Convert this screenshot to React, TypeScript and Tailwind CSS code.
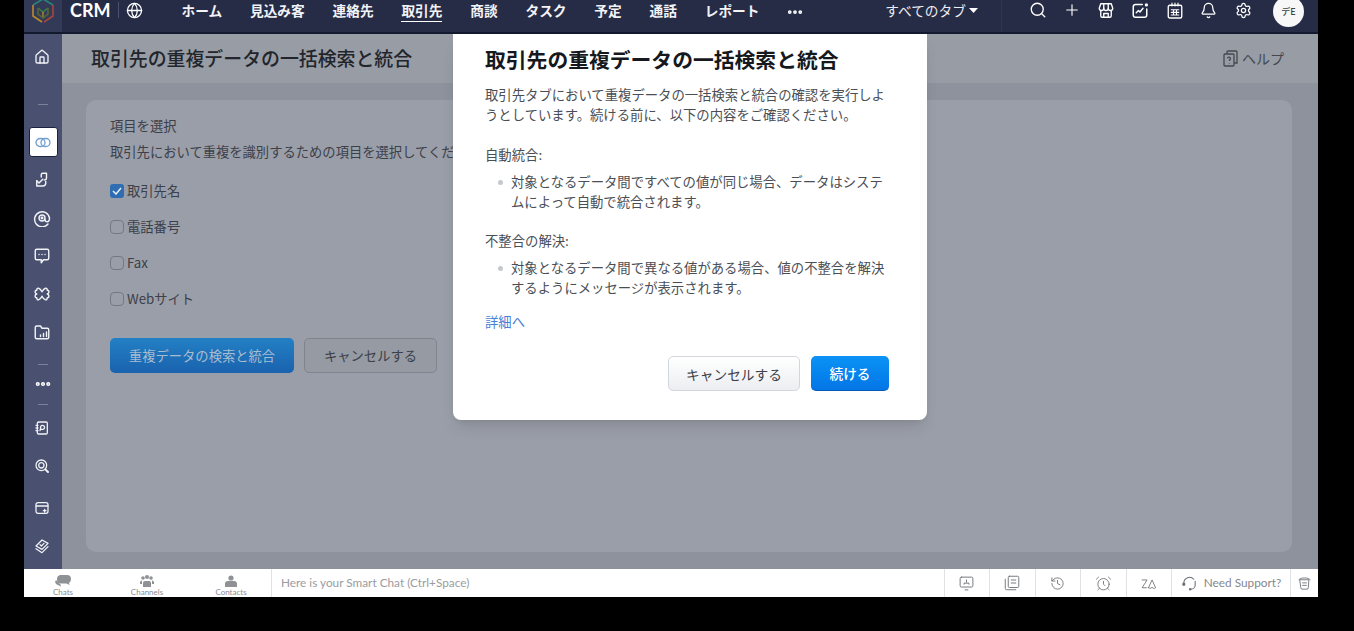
import { Search, Plus, Bell, Settings, Home, MoreHorizontal, History, AlarmClock, Globe } from 'lucide-react';
import { ReactNode } from 'react';

const jp = { fontFamily: '"Noto Sans CJK JP", sans-serif' };

const navItems = ['ホーム', '見込み客', '連絡先', '取引先', '商談', 'タスク', '予定', '通話', 'レポート'];

function Ico({ children, size = 18, sw = 2 }: { children: ReactNode; size?: number; sw?: number }) {
  return (
    <svg width={size} height={size} viewBox="0 0 24 24" fill="none" stroke="currentColor" strokeWidth={sw} strokeLinecap="round" strokeLinejoin="round">
      {children}
    </svg>
  );
}

function Logo() {
  return (
    <svg width="24" height="26" viewBox="0 0 24 26" fill="none" strokeWidth="1.6">
      <path d="M2 7 L12 1 L22 7" stroke="#2a8478" />
      <path d="M2 7 V18 L11 24" stroke="#b98a2a" />
      <path d="M22 7 V18 L13 24" stroke="#a8443c" />
      <path d="M7 10 L12 14 L17 10" stroke="#3a7d49" />
      <path d="M12 14 V20" stroke="#a67c28" />
      <path d="M7 10 V16 L12 20 L17 16 V10" stroke="#566636" />
    </svg>
  );
}

function TopIcon({ children }: { children: ReactNode }) {
  return <div className="w-[18px] h-[20px] flex items-center justify-center">{children}</div>;
}

function TopBar() {
  return (
    <header className="h-[34px] shrink-0 bg-[#272c46] border-b-2 border-[#131a30] flex items-start text-white relative">
      <div className="w-[38px] h-full bg-[#333a57] flex justify-center items-start overflow-hidden">
        <div className="-mt-[2px]"><Logo /></div>
      </div>
      <span className="ml-2 mt-[1px] text-[18px] font-bold leading-[18px]" style={{ fontFamily: 'Lato, sans-serif' }}>CRM</span>
      <span className="ml-[7px] mt-[2px] w-px h-4 bg-[#4a5070]" />
      <Globe size={17} strokeWidth={1.8} className="ml-[7px] mt-[2px] text-white" />
      <nav className="ml-[39px] flex items-start gap-[27.8px]" style={jp}>
        {navItems.map((item) => (
          <div key={item} className="relative">
            <span className="block text-[13.7px] font-bold leading-5 text-[#f2f3f6]">{item}</span>
            {item === '取引先' && <span className="absolute left-0 right-0 top-[21px] h-px bg-white" />}
          </div>
        ))}
        <MoreHorizontal size={18} strokeWidth={3} className="mt-[3px] -ml-[1px]" />
      </nav>
      <div className="ml-[81px] flex items-center gap-[3px]" style={jp}>
        <span className="text-[13.7px] leading-5 text-[#eceef3]">すべてのタブ</span>
        <svg width="9" height="5" viewBox="0 0 9 5" className="fill-white"><path d="M0 0h9L4.500 5z" /></svg>
      </div>
      <span className="ml-[23px] w-px h-full bg-[#30364f]" />
      <div className="ml-[27px] flex items-center gap-[16.2px]">
        <TopIcon><Search size={18} strokeWidth={1.8} /></TopIcon>
        <TopIcon><Plus size={24} strokeWidth={1.5} /></TopIcon>
        <TopIcon>
          <Ico size={19} sw={1.8}>
            <path d="M5 3h14l2 6a3 3 0 0 1-6 0 3 3 0 0 1-6 0 3 3 0 0 1-6 0z" />
            <path d="M9 3v6M15 3v6" />
            <path d="M5 12v7a2 2 0 0 0 2 2h10a2 2 0 0 0 2-2v-7" />
            <path d="M9 21v-5h6v5" />
          </Ico>
        </TopIcon>
        <TopIcon>
          <Ico size={19} sw={2}>
            <path d="M21 10v8a3 3 0 0 1-3 3H6a3 3 0 0 1-3-3V7a3 3 0 0 1 3-3h9" />
            <path d="M7 15l3-3 2 2 4-5" />
            <circle cx="20.500" cy="4.500" r="1.200" fill="currentColor" />
          </Ico>
        </TopIcon>
        <TopIcon>
          <Ico size={19} sw={1.8}>
            <rect x="3" y="5" width="18" height="17" rx="2" />
            <path d="M8 2v4M12 2v4M16 2v4M7 11h10M7 14.500h10M7 18h10M10 11v7M14 11v7" strokeWidth="1.500" />
          </Ico>
        </TopIcon>
        <TopIcon><Bell size={17} strokeWidth={1.8} /></TopIcon>
        <TopIcon><Settings size={17} strokeWidth={1.8} /></TopIcon>
      </div>
      <div className="ml-[21px] -mt-[4px] w-[31px] h-[31px] rounded-full bg-[#f7f7f8] text-[#444] text-[9px] font-medium flex items-center justify-center" style={jp}>
        デE
      </div>
    </header>
  );
}

function SideIcon({ children, active }: { children: ReactNode; active?: boolean }) {
  return (
    <div className={active ? 'w-[29px] h-[30px] rounded-[3px] bg-white text-[#6f9fd0] flex items-center justify-center border border-[#1c2340]' : 'w-[29px] h-[30px] pr-[2px] flex items-center justify-center text-[#f2f3f7]'}>
      {children}
    </div>
  );
}

function Rule() {
  return <span className="w-[10px] h-px bg-[#7d829b]" />;
}

function SideBar() {
  return (
    <aside className="w-[38px] shrink-0 bg-[#4a5170] flex flex-col items-center pt-[8px]">
      <SideIcon><Home size={16} strokeWidth={2} /></SideIcon>
      <div className="mt-[32px] mb-[22px] flex"><Rule /></div>
      <div className="flex flex-col items-center gap-[8px]">
        <SideIcon active>
          <svg width="16" height="11" viewBox="0 0 16 11" fill="none" stroke="currentColor" strokeWidth="1.300">
            <rect x="1" y="1.500" width="9" height="8" rx="4" />
            <rect x="6" y="1.500" width="9" height="8" rx="4" />
          </svg>
        </SideIcon>
        <SideIcon>
          <Ico sw={1.9}>
            <path d="M11 8V5a2 2 0 0 1 2-2h5v6a3 3 0 0 1-3 3" />
            <path d="M5 13l3 3 5-5" />
            <path d="M5 13v7h8a4 4 0 0 0 4-4v-2" />
          </Ico>
        </SideIcon>
        <SideIcon>
          <Ico sw={1.9}>
            <circle cx="12" cy="12" r="4" />
            <circle cx="12" cy="12" r="1" />
            <path d="M20 20a10 10 0 1 1 2-8c0 3-1 5-3 5s-3-1-3-3" />
          </Ico>
        </SideIcon>
        <SideIcon>
          <Ico sw={1.9}>
            <path d="M5 3h14a2 2 0 0 1 2 2v10a2 2 0 0 1-2 2h-5l-3 4v-4H5a2 2 0 0 1-2-2V5a2 2 0 0 1 2-2z" />
            <path d="M8 10h.01M12 10h.01M16 10h.01" />
          </Ico>
        </SideIcon>
        <SideIcon>
          <Ico sw={1.9}>
            <path d="M12 9C9 3 5 3 5 7c-3 0-3 4 0 5-3 1-3 5 0 5 0 4 4 4 7-2 3 6 7 6 7 2 3 0 3-4 0-5 3-1 3-5 0-5 0-4-4-4-7 2z" />
          </Ico>
        </SideIcon>
        <SideIcon>
          <Ico sw={1.9}>
            <path d="M3 6a2 2 0 0 1 2-2h5l2 3h7a2 2 0 0 1 2 2v10a2 2 0 0 1-2 2H5a2 2 0 0 1-2-2z" />
            <path d="M10 18v-2M14 18v-4M18 18v-6" />
          </Ico>
        </SideIcon>
      </div>
      <div className="mt-[17px] flex"><Rule /></div>
      <div className="mt-[10px] mb-[11px] h-[18px] flex items-center text-white">
        <MoreHorizontal size={18} strokeWidth={3.5} />
      </div>
      <Rule />
      <div className="mt-[8px] flex flex-col items-center gap-[8px]">
        <SideIcon>
          <Ico size={16} sw={1.9}>
            <rect x="5" y="3" width="15" height="18" rx="2" />
            <path d="M3 8h3M3 12h3M3 16h3M9 16l1-4a3 3 0 1 1 3 2h-2" />
          </Ico>
        </SideIcon>
        <SideIcon>
          <Ico size={16} sw={1.9}>
            <circle cx="11" cy="11" r="8" />
            <circle cx="11" cy="11" r="4" />
            <path d="M17 17l4 4" strokeWidth="3" />
          </Ico>
        </SideIcon>
        <div className="mt-[4px]">
          <SideIcon>
            <Ico size={16} sw={1.9}>
              <rect x="3" y="4" width="18" height="16" rx="3" />
              <path d="M3 9h18M16 14v4M14 16h4" />
            </Ico>
          </SideIcon>
        </div>
        <SideIcon>
          <Ico size={16} sw={1.9}>
            <path d="M3 12l9-9 9 5-9 9z" />
            <path d="M3 16l9 6 9-9" />
            <path d="M9 10l2 2 4-4" />
          </Ico>
        </SideIcon>
      </div>
    </aside>
  );
}

function CheckRow({ label, checked }: { label: string; checked?: boolean }) {
  return (
    <label className="h-5 flex items-center gap-[3px] text-[13.3px] leading-5 text-[#3c4048]">
      {checked ? (
        <span className="w-[14px] h-[14px] rounded-[3px] bg-[#2f6db3] flex items-center justify-center">
          <svg width="10" height="8" viewBox="0 0 10 8" fill="none" stroke="#e8edf3" strokeWidth="1.500"><path d="M1 4l3 3 5-6" /></svg>
        </span>
      ) : (
        <span className="w-[14px] h-[14px] rounded-[4px] border-[1.5px] border-[#74787f]" />
      )}
      <span>{label}</span>
    </label>
  );
}

function Main() {
  return (
    <main className="flex-1 min-w-0 bg-[#8d929c] flex flex-col" style={jp}>
      <div className="h-[49px] shrink-0 bg-[#979ca5] flex items-center justify-between pl-[29px] pr-[34px]">
        <h1 className="text-[18.900px] leading-[26px] -mt-[2px] font-medium text-[#22252b] whitespace-nowrap">取引先の重複データの一括検索と統合</h1>
        <div className="flex items-center gap-1 text-[#44484f] text-[14px]">
          <svg width="15" height="17" viewBox="0 0 15 17" fill="none" stroke="currentColor" strokeWidth="1.300">
            <rect x="1" y="4" width="10" height="12" rx="1" />
            <path d="M4 4V2a1 1 0 0 1 1-1h8a1 1 0 0 1 1 1v11h-3" />
            <path d="M4.500 8.500a1.500 1.500 0 1 1 2 1.500v1M6.500 13v.5" />
          </svg>
          <span>ヘルプ</span>
        </div>
      </div>
      <div className="flex-1 ml-[24px] mt-[17px] mb-[17px] mr-[26px] bg-[#9a9ea8] rounded-[10px] pl-[24px] pt-[16px]">
        <p className="text-[13.3px] leading-5 text-[#3c4048]">項目を選択</p>
        <p className="mt-[6px] text-[13.3px] leading-5 text-[#3c4048] whitespace-nowrap">取引先において重複を識別するための項目を選択してください。</p>
        <div className="mt-[19px] flex flex-col gap-4">
          <CheckRow label="取引先名" checked />
          <CheckRow label="電話番号" />
          <CheckRow label="Fax" />
          <CheckRow label="Webサイト" />
        </div>
        <div className="mt-[29px] flex gap-[10px]">
          <button className="w-[184px] h-[35px] rounded-[5px] bg-gradient-to-b from-[#2380c4] to-[#1a62ae] text-[#a9bccf] text-[13.3px]">重複データの検索と統合</button>
          <button className="w-[133px] h-[35px] rounded-[5px] bg-[#959aa3] border border-[#80848d] text-[#3c4048] text-[13.3px]">キャンセルする</button>
        </div>
      </div>
    </main>
  );
}

function Dialog() {
  return (
    <div className="absolute left-[429px] top-[34px] w-[474px] h-[386px] bg-white rounded-b-[8px] shadow-lg pl-[32px] pr-[38px] pt-[11px] text-[13.35px] leading-5 text-[#4a4e55]" style={jp}>
      <h2 className="text-[20.8px] leading-[28px] font-bold text-[#15181d] whitespace-nowrap">取引先の重複データの一括検索と統合</h2>
      <p className="mt-[12px] w-[405px]">取引先タブにおいて重複データの一括検索と統合の確認を実行しようとしています。続ける前に、以下の内容をご確認ください。</p>
      <p className="mt-[20px]">自動統合:</p>
      <ul className="mt-[7px] pl-[26px] relative">
        <li className="w-[380px] leading-[19.500px] before:absolute before:left-[13px] before:top-[8px] before:w-[5px] before:h-[5px] before:rounded-full before:bg-[#c5c8cc]">対象となるデータ間ですべての値が同じ場合、データはシステムによって自動で統合されます。</li>
      </ul>
      <p className="mt-[20px]">不整合の解決:</p>
      <ul className="mt-[7px] pl-[26px] relative">
        <li className="w-[380px] leading-[19.500px] before:absolute before:left-[13px] before:top-[8px] before:w-[5px] before:h-[5px] before:rounded-full before:bg-[#c5c8cc]">対象となるデータ間で異なる値がある場合、値の不整合を解決するようにメッセージが表示されます。</li>
      </ul>
      <a className="mt-[15px] block text-[#4a7fd6]">詳細へ</a>
      <div className="mt-[24px] flex justify-end gap-[11px] text-[13.7px]">
        <button className="w-[132px] h-[35px] rounded-[5px] bg-gradient-to-b from-white to-[#eceef1] border border-[#d3d6da] text-[#3c4048]">キャンセルする</button>
        <button className="w-[78px] h-[35px] rounded-[5px] bg-gradient-to-b from-[#0b93f5] to-[#0575e6] border-b border-[#0459b5] text-white font-medium">続ける</button>
      </div>
    </div>
  );
}

function FootTab({ label, children }: { label: string; children: ReactNode }) {
  return (
    <div className="w-[84px] shrink-0 flex flex-col items-center pt-[6px]">
      {children}
      <span className="mt-[1px] text-[8px] leading-[9px] text-[#8a8c90]">{label}</span>
    </div>
  );
}

function Cell({ children, wide }: { children: ReactNode; wide?: boolean }) {
  return (
    <div className={wide ? 'w-[119px] border-l border-[#dfe1e4] flex items-center justify-center gap-[6px]' : 'w-[45.500px] border-l border-[#dfe1e4] flex items-center justify-center'}>
      {children}
    </div>
  );
}

function Footer() {
  return (
    <footer className="h-[28px] shrink-0 bg-white flex text-[#6b6e73] overflow-hidden" style={{ fontFamily: 'Lato, sans-serif' }}>
      <div className="w-[247px] flex -ml-[3px] mr-[3px]">
        <FootTab label="Chats">
          <svg width="16" height="12" viewBox="0 0 16 12" fill="#8f9194"><path d="M6 0h6a4 4 0 0 1 4 4c0 2-1 3-2 4l.5 2-3-1.500H6a4 4 0 0 1-4-4 4 4 0 0 1 4-4.500z" /><path d="M1 5a3 3 0 0 0 2 5l3 1.500-.5-2z" /></svg>
        </FootTab>
        <FootTab label="Channels">
          <svg width="14" height="12" viewBox="0 0 14 12" fill="#8f9194"><circle cx="3" cy="3" r="1.800" /><circle cx="11" cy="3" r="1.800" /><circle cx="7" cy="2" r="2" /><path d="M3 12V8a2 2 0 0 1 2-2h4a2 2 0 0 1 2 2v4z" /><path d="M0 9V7a2 2 0 0 1 2-1.500L2 9zM14 9V7a2 2 0 0 0-2-1.500V9z" /></svg>
        </FootTab>
        <FootTab label="Contacts">
          <svg width="12" height="12" viewBox="0 0 12 12" fill="#8f9194"><circle cx="6" cy="3" r="2.600" /><path d="M0 12V9a3 3 0 0 1 3-3h6a3 3 0 0 1 3 3v3z" /></svg>
        </FootTab>
      </div>
      <div className="flex-1 border-l border-[#dfe1e4] pl-[9px] flex items-center text-[11.800px] text-[#9a9ca0]">Here is your Smart Chat (Ctrl+Space)</div>
      <Cell>
        <Ico size={17} sw={1.300}><rect x="3" y="3" width="18" height="14" rx="2" /><path d="M12 7v3M8.500 13v-1.500h7V13M10 21h4" /></Ico>
      </Cell>
      <Cell>
        <Ico size={18} sw={1.200}><rect x="7" y="3" width="14" height="15" rx="1.500" /><path d="M3 7v12a2 2 0 0 0 2 2h12M11 8h6M11 12h6" /></Ico>
      </Cell>
      <Cell><History size={15} strokeWidth={1.400} /></Cell>
      <Cell><AlarmClock size={17} strokeWidth={1.200} /></Cell>
      <Cell>
        <Ico size={17} sw={1.200}><path d="M3 7h7L3 18h6" /><path d="M12 18l5-11 5 11a3 3 0 0 1-5-1 3 3 0 0 1-5 1z" /></Ico>
      </Cell>
      <Cell wide>
        <Ico size={17} sw={1.500}>
          <path d="M4 14v-3a8 8 0 0 1 14-5" />
          <path d="M20 9v5a6 6 0 0 1-6 6" />
          <circle cx="4" cy="13" r="1.500" fill="currentColor" />
          <circle cx="13" cy="20" r="1" fill="currentColor" />
        </Ico>
        <span className="text-[11.800px] text-[#85878b] whitespace-nowrap">Need Support?</span>
      </Cell>
      <div className="w-[28px] border-l border-[#dfe1e4] flex items-center justify-center">
        <Ico size={15} sw={1.400}><path d="M5 6h14l-1 13a2 2 0 0 1-2 2H8a2 2 0 0 1-2-2z" /><path d="M3 6c0-4 18-4 18 0M9 11h6M9 15h6" /></Ico>
      </div>
    </footer>
  );
}

export default function App() {
  return (
    <div className="w-[1354px] h-[631px] bg-black overflow-hidden pl-[24px]">
      <div className="w-[1294px] h-[597px] flex flex-col relative">
        <TopBar />
        <div className="flex flex-1 min-h-0">
          <SideBar />
          <Main />
        </div>
        <Footer />
        <Dialog />
      </div>
    </div>
  );
}
